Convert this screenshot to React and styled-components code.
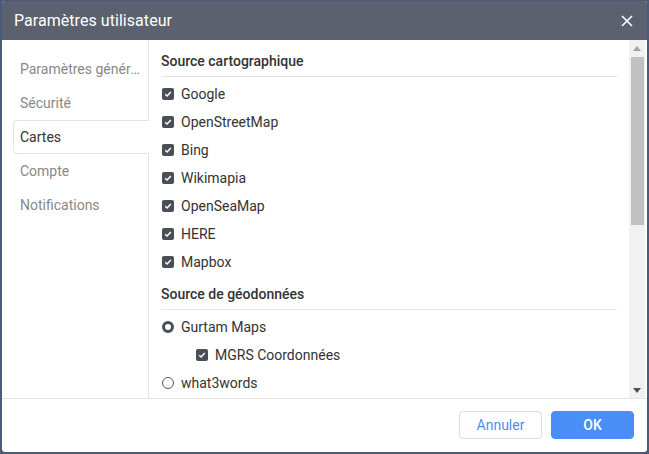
import React from 'react';
import styled, {createGlobalStyle} from 'styled-components';

const GlobalStyle = createGlobalStyle`
  html, body {
    margin: 0;
    padding: 0;
    background: #4b5a77;
  }
  body {
    font-family: Roboto, "Liberation Sans", sans-serif;
    font-size: 14px;
    color: #333;
  }
`;

const Dialog = styled.div`
  margin: 1px 2px 0 2px;
  width: 645px;
  height: 451px;
  background: #fff;
  border-radius: 3px;
  overflow: hidden;
  display: flex;
  flex-direction: column;
`;

const Header = styled.div`
  height: 39px;
  flex-shrink: 0;
  background: #5b616e;
  display: flex;
  align-items: center;
  justify-content: space-between;
  padding: 0 12px 0 12px;
`;

const Title = styled.h1`
  margin: 0;
  font-size: 16px;
  font-weight: 400;
  color: #fff;
  letter-spacing: 0.05px;
`;

const CloseButton = styled.button`
  border: 0;
  background: none;
  padding: 0;
  width: 16px;
  height: 16px;
  display: flex;
  align-items: center;
  justify-content: center;
  cursor: pointer;
`;

const Body = styled.div`
  flex: 1;
  display: flex;
  min-height: 0;
`;

const Sidebar = styled.nav`
  width: 147px;
  flex-shrink: 0;
  border-right: 1px solid #e4e4e4;
  padding-top: 12px;
  box-sizing: border-box;
  display: flex;
  flex-direction: column;
  align-items: flex-end;
`;

const Tab = styled.div`
  height: 34px;
  box-sizing: border-box;
  padding-left: 6px;
  display: flex;
  align-items: center;
  color: ${p => (p.$active ? '#333' : '#888')};
  background: #fff;
  border: 1px solid ${p => (p.$active ? '#e4e4e4' : 'transparent')};
  border-right: none;
  border-radius: 4px 0 0 4px;
  margin-right: ${p => (p.$active ? '-1px' : '0')};
  width: ${p => (p.$active ? '136px' : '135px')};
`;

const TabText = styled.span`
  display: block;
  width: 120px;
  overflow: hidden;
  text-overflow: ellipsis;
  white-space: nowrap;
`;

const ContentWrap = styled.div`
  flex: 1;
  display: flex;
  min-width: 0;
`;

const Content = styled.div`
  flex: 1;
  padding: 11px 12px 0 12px;
  overflow: hidden;
`;

const SectionTitle = styled.div`
  font-weight: 500;
  color: #333;
  height: 25px;
  line-height: 21px;
  border-bottom: 1px solid #e4e4e4;
  margin-bottom: 3px;
`;

const Row = styled.label`
  display: flex;
  align-items: center;
  height: 28px;
  gap: 7px;
  padding-left: ${p => (p.$indent ? '35px' : '1px')};
  color: #333;
`;

const Box = styled.span`
  width: 12px;
  height: 12px;
  border-radius: 2px;
  background: #4a4e57;
  display: flex;
  align-items: center;
  justify-content: center;
  flex-shrink: 0;
`;

const Radio = styled.span`
  width: 12px;
  height: 12px;
  border-radius: 50%;
  box-sizing: border-box;
  border: ${p => (p.$checked ? '3.5px solid #4a4e57' : '1px solid #555')};
  background: #fff;
  flex-shrink: 0;
`;

const Group = styled.div`
  margin-bottom: 8px;
`;

const Scrollbar = styled.div`
  width: 16px;
  flex-shrink: 0;
  background: #f1f1f1;
  display: flex;
  flex-direction: column;
  align-items: center;
  margin-right: 2px;
`;

const Arrow = styled.div`
  height: 16px;
  width: 16px;
  display: flex;
  align-items: center;
  justify-content: center;
`;

const Thumb = styled.div`
  width: 13px;
  height: 168px;
  background: #c1c1c1;
  margin-top: 1px;
`;

const Spacer = styled.div`
  flex: 1;
`;

const Footer = styled.div`
  height: 52px;
  flex-shrink: 0;
  border-top: 1px solid #e4e4e4;
  display: flex;
  align-items: center;
  justify-content: flex-end;
  gap: 9px;
  padding-right: 13px;
  padding-bottom: 1px;
`;

const Button = styled.button`
  width: 83px;
  height: 28px;
  border-radius: 4px;
  font-family: inherit;
  font-size: 14px;
  cursor: pointer;
  border: 1px solid ${p => (p.$primary ? '#4a8ff7' : '#dcdcdc')};
  background: ${p => (p.$primary ? '#4a8ff7' : '#fff')};
  color: ${p => (p.$primary ? '#fff' : '#4a8ff7')};
  font-weight: ${p => (p.$primary ? 500 : 400)};
`;

const Check = () => (
  <svg width="8" height="8" viewBox="0 0 8 8">
    <path d="M1.2 4.2 L3.1 6 L6.8 2" fill="none" stroke="#fff" strokeWidth="1.5" />
  </svg>
);

const tabs = ['Paramètres généraux', 'Sécurité', 'Cartes', 'Compte', 'Notifications'];
const maps = ['Google', 'OpenStreetMap', 'Bing', 'Wikimapia', 'OpenSeaMap', 'HERE', 'Mapbox'];

export default function App() {
  return (
    <>
      <GlobalStyle />
      <Dialog>
        <Header>
          <Title>Paramètres utilisateur</Title>
          <CloseButton aria-label="Fermer">
            <svg width="12" height="12" viewBox="0 0 12 12">
              <path d="M1 1 L11 11 M11 1 L1 11" stroke="#fff" strokeWidth="1.6" />
            </svg>
          </CloseButton>
        </Header>
        <Body>
          <Sidebar>
            {tabs.map(t => (
              <Tab key={t} $active={t === 'Cartes'} title={t}>
                <TabText>{t}</TabText>
              </Tab>
            ))}
          </Sidebar>
          <ContentWrap>
            <Content>
              <Group>
                <SectionTitle>Source cartographique</SectionTitle>
                {maps.map(m => (
                  <Row key={m}>
                    <Box>
                      <Check />
                    </Box>
                    {m}
                  </Row>
                ))}
              </Group>
              <SectionTitle>Source de géodonnées</SectionTitle>
              <Row>
                <Radio $checked />
                Gurtam Maps
              </Row>
              <Row $indent>
                <Box>
                  <Check />
                </Box>
                MGRS Coordonnées
              </Row>
              <Row>
                <Radio />
                what3words
              </Row>
            </Content>
            <Scrollbar>
              <Arrow>
                <svg width="8" height="5" viewBox="0 0 8 5">
                  <path d="M0 5 L4 0 L8 5 Z" fill="#a3a3a3" />
                </svg>
              </Arrow>
              <Thumb />
              <Spacer />
              <Arrow>
                <svg width="8" height="5" viewBox="0 0 8 5">
                  <path d="M0 0 L4 5 L8 0 Z" fill="#505050" />
                </svg>
              </Arrow>
            </Scrollbar>
          </ContentWrap>
        </Body>
        <Footer>
          <Button>Annuler</Button>
          <Button $primary>OK</Button>
        </Footer>
      </Dialog>
    </>
  );
}
